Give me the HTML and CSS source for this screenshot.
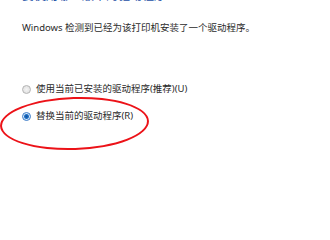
FILE: index.html
```html
<!DOCTYPE html>
<html lang="zh-CN">
<head>
  <meta charset="UTF-8" />
  <title>添加打印机</title>
  <link rel="stylesheet" href="styles.css">
</head>
<body>
  <div class="page">
    <h1 class="heading">要使用哪个版本的驱动程序?</h1>
    <p class="desc">Windows 检测到已经为该打印机安装了一个驱动程序。</p>

    <div class="options">
      <label class="option">
        <span class="radio"></span>
        <span>使用当前已安装的驱动程序(推荐)(U)</span>
      </label>
      <label class="option picked">
        <span class="radio checked"></span>
        <span>替换当前的驱动程序(R)</span>
        <!-- red hand-drawn circle round the chosen option -->
        <span class="mark"></span>
      </label>
    </div>
  </div>
</body>
</html>
```

FILE: styles.css
```css
html, body {
  height: 100%;
}
body {
  margin: 0;
  background: white;
  font-family: "Noto Sans", "Noto Sans CJK SC", sans-serif;
  color: #2b2b2b;
}
.page {
  min-height: 240px;
  padding-left: 22px;
}
.heading {
  margin: -11px 0 0 0;
  font-size: 12px;
  font-weight: normal;
  color: #1d4fa6;
  line-height: 13px;
}
.desc {
  margin: 20px 0 0 0;
  font-size: 9.5px;
  line-height: 12px;
}
.options {
  margin-top: 49px;
  display: flex;
  flex-direction: column;
  gap: 15px;
}
.option {
  display: flex;
  align-items: center;
  gap: 5px;
  font-size: 9.5px;
  line-height: 12px;
}
.option.picked {
  position: relative;
}
.radio {
  width: 7px;
  height: 7px;
  border-radius: 50%;
  border: 1px solid #b4b4b4;
  background: radial-gradient(circle, #f4f4f4 0%, #dcdcdc 100%);
}
.radio.checked {
  border-color: #3a7bc8;
  background: radial-gradient(circle, #0e4f9e 0%, #1d6fc4 40%, #d6e8f8 60%, #eaf3fb 100%);
}
.mark {
  position: absolute;
  left: -22px;
  top: -13px;
  width: 149px;
  height: 53px;
  box-sizing: border-box;
  border: 2.5px solid #ec1218;
  border-radius: 50%;
  transform: rotate(-2deg);
}
```
